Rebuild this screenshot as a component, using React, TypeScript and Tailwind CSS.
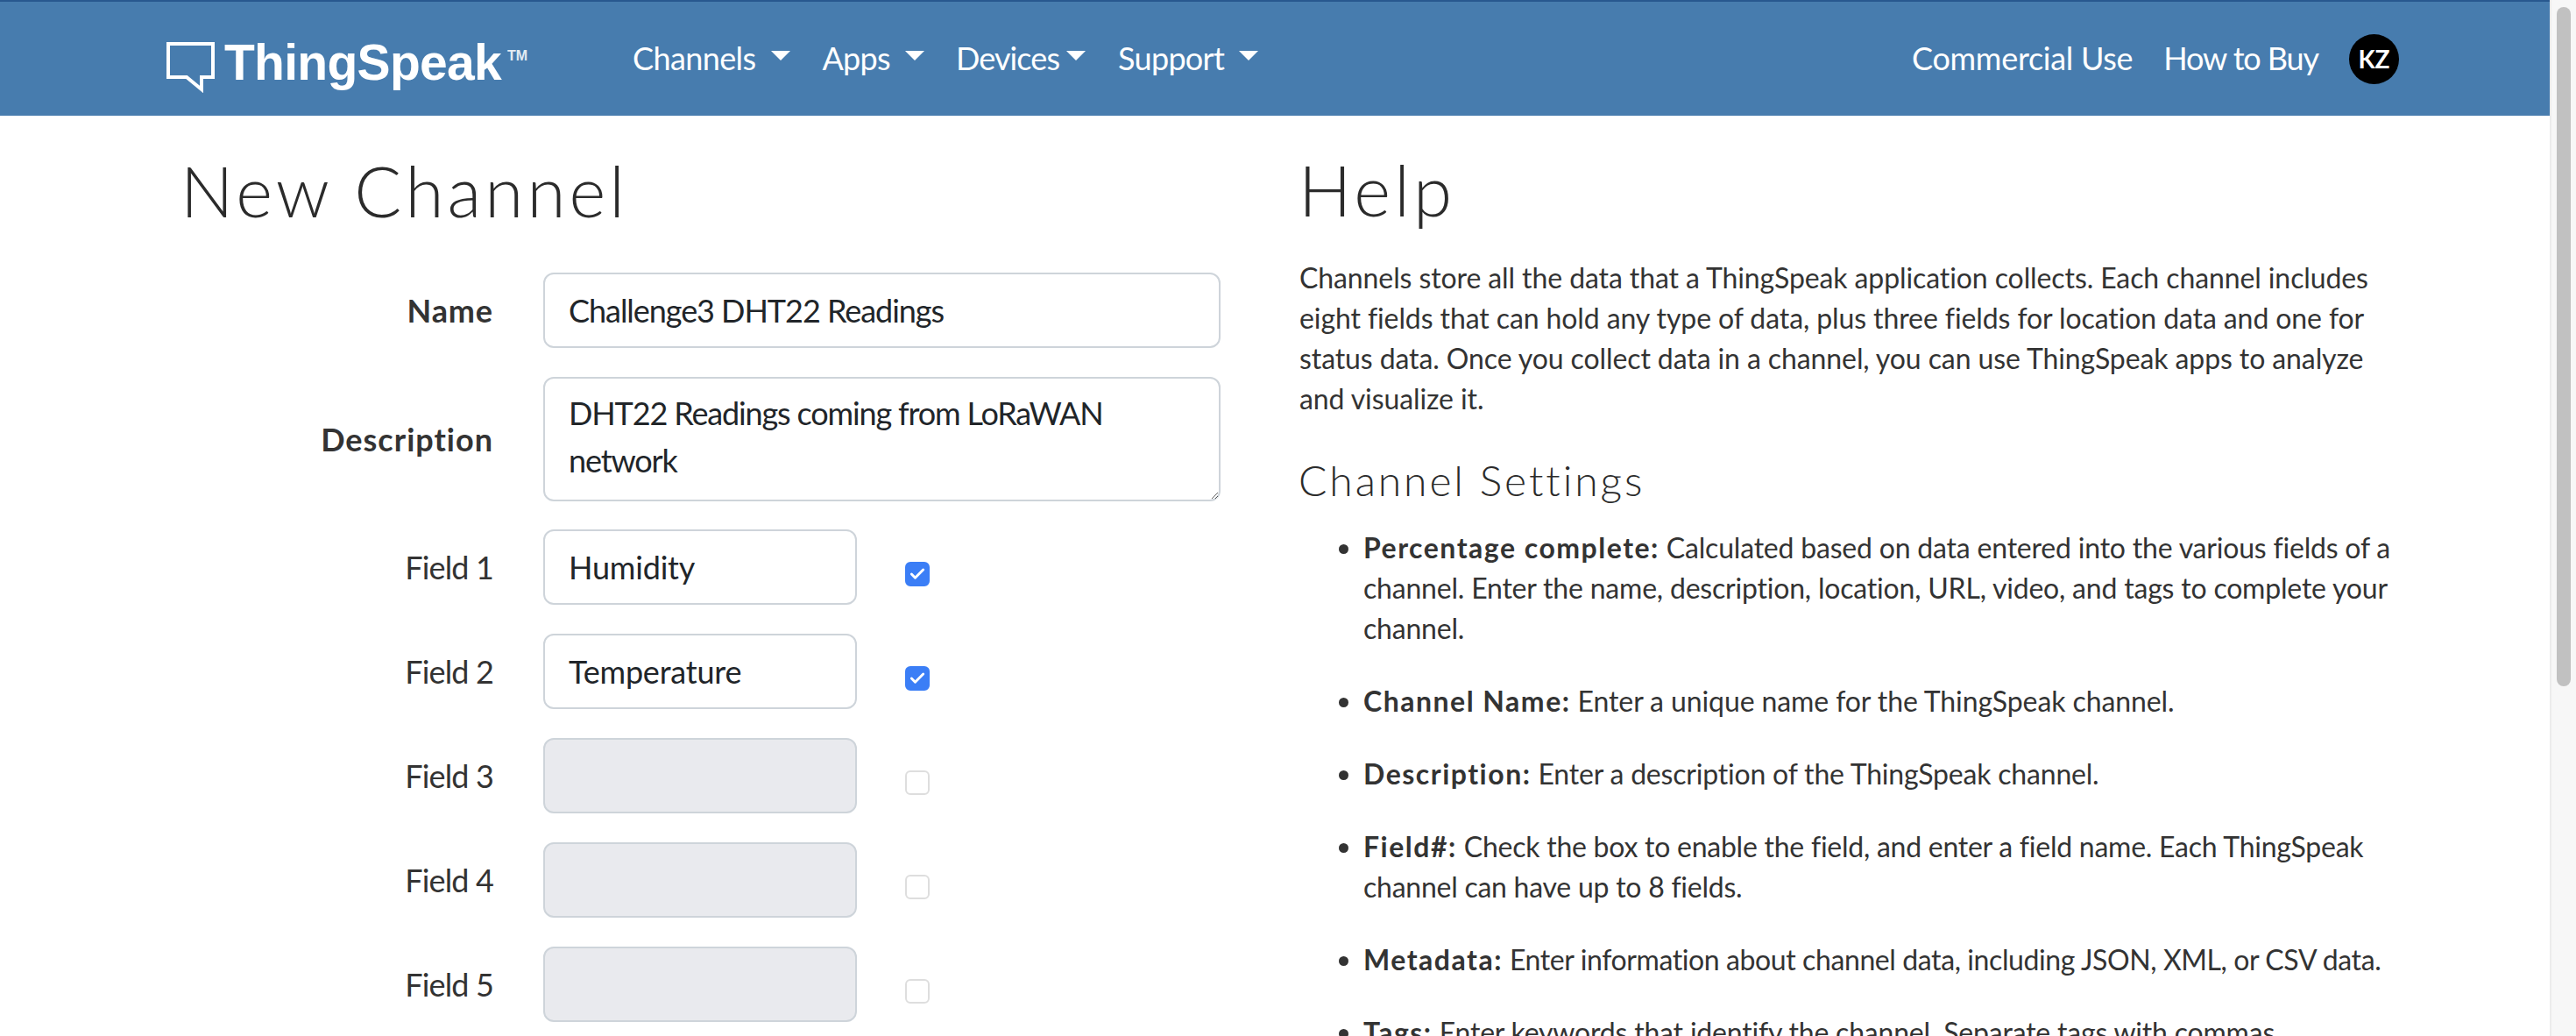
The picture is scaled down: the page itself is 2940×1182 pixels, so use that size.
import { Check } from "lucide-react";

const NavLink = ({ label, caret, className }: { label: string; caret?: boolean; className?: string }) => (
  <a className={"flex items-center text-[36px] leading-[54px] text-white -mt-[2px] " + (className ?? "")}>
    {label}
    {caret && <span className="ml-[17px] mb-[6px] border-x-[11px] border-t-[11px] border-x-transparent border-t-white" />}
  </a>
);

const Logo = () => (
  <div className="flex items-start w-[415px] h-[64px]">
    <svg width="55" height="58" viewBox="0 0 55 58" className="mt-[13px] shrink-0" fill="none">
      <path d="M2 2H53V40H40V54L23 40H2Z" stroke="white" strokeWidth="4" />
    </svg>
    <span className="ml-[11px] mt-[4px] font-['Liberation_Sans',sans-serif] font-bold text-[57px] leading-[64px] text-white tracking-[-0.7px]">ThingSpeak</span>
    <span className="ml-[7px] mt-[19px] font-['Liberation_Sans',sans-serif] font-bold text-[16px] leading-[20px] text-white/85">TM</span>
  </div>
);

const Navbar = () => (
  <nav className="h-[132px] shrink-0 bg-[#477cae] border-t-[2px] border-[#28588f] flex items-center pl-[190px] pr-[172px]">
    <Logo />
    <div className="flex items-center gap-[37px] ml-[117px]">
      <NavLink label="Channels" caret className="tracking-[-0.6px]" />
      <NavLink label="Apps" caret className="tracking-[-0.7px]" />
      <NavLink label="Devices" caret className="tracking-[-0.9px] -ml-[1px] [&>span]:ml-[8px]" />
      <NavLink label="Support" caret className="tracking-[-0.7px]" />
    </div>
    <div className="flex items-center ml-auto gap-[35px]">
      <NavLink label="Commercial Use" className="tracking-[-0.3px]" />
      <NavLink label="How to Buy" className="tracking-[-1.1px]" />
      <div className="w-[57px] h-[57px] rounded-full bg-black flex items-center justify-center text-white font-bold text-[28px]">KZ</div>
    </div>
  </nav>
);

const inputCls = "block h-[86px] rounded-[12px] border-[2px] border-[#ced4da] px-[27px] text-[36px] text-[#212529] outline-none bg-white disabled:bg-[#e9eaee]";

const FieldRow = ({ n, value, on }: { n: number; value?: string; on?: boolean }) => (
  <div className="flex items-center gap-[57px] mb-[33px]">
    <label className="w-[357px] text-right text-[36px] text-[#333] tracking-[-0.85px]">Field {n}</label>
    <input readOnly disabled={!on} value={value ?? ""} className={inputCls + " w-[358px] tracking-[-0.2px]"} />
    <span
      className={
        "ml-[-2px] mt-[15px] w-[28px] h-[28px] rounded-[6px] border-[2px] flex items-center justify-center " +
        (on ? "bg-[#3b7ef6] border-[#3b7ef6]" : "bg-white border-[#dedede]")
      }
    >
      {on && <Check size={20} strokeWidth={3.5} className="text-white" />}
    </span>
  </div>
);

const NewChannelForm = () => (
  <section className="w-[1483px] shrink-0 pl-[206px]">
    <h1 className="text-[80px] leading-[96px] font-light text-[#2b2b2b] pt-[37px] pb-[46px] tracking-[4.1px]">New Channel</h1>
    <div className="flex items-center gap-[57px] mb-[33px]">
      <label className="w-[357px] text-right text-[36px] font-bold text-[#333] tracking-[0.9px]">Name</label>
      <input readOnly value="Challenge3 DHT22 Readings" className={inputCls + " w-[773px] tracking-[-1.05px]"} />
    </div>
    <div className="flex items-center gap-[57px] mb-[32px]">
      <label className="w-[357px] text-right text-[36px] font-bold text-[#333] tracking-[1px]">Description</label>
      <textarea
        readOnly
        value="DHT22 Readings coming from LoRaWAN network"
        className={inputCls + " w-[773px] !h-[142px] py-[12px] leading-[54px] resize-y tracking-[-1.15px]"}
      />
    </div>
    <FieldRow n={1} value="Humidity" on />
    <FieldRow n={2} value="Temperature" on />
    <FieldRow n={3} />
    <FieldRow n={4} />
    <FieldRow n={5} />
  </section>
);

const HelpItem = ({ title, children, className }: { title: string; children: React.ReactNode; className?: string }) => (
  <li className="list-disc mb-[37px]">
    <b className="font-bold tracking-[1.5px]">{title}</b> <span className={className}>{children}</span>
  </li>
);

const HelpPanel = () => (
  <section className="flex-1 min-w-0 text-[32px] leading-[46px] text-[#333] tracking-[-0.1px] whitespace-nowrap">
    <h1 className="text-[80px] leading-[96px] font-light text-[#2b2b2b] pt-[36px] pb-[30px] tracking-[4.2px] -ml-[1px]">Help</h1>
    <p>
      Channels store all the data that a ThingSpeak application collects. Each channel includes<br />
      eight fields that can hold any type of data, plus three fields for location data and one for<br />
      status data. Once you collect data in a channel, you can use ThingSpeak apps to analyze<br />
      and visualize it.
    </p>
    <h2 className="text-[48px] leading-[58px] font-light text-[#2b2b2b] mt-[41px] mb-[25px] tracking-[2.9px] -ml-[1px]">Channel Settings</h2>
    <ul className="pl-[73px]">
      <HelpItem title="Percentage complete:" className="tracking-[-0.2px]">
        Calculated based on data entered into the various fields of a<br />
        channel. Enter the name, description, location, URL, video, and tags to complete your<br />
        channel.
      </HelpItem>
      <HelpItem title="Channel Name:">Enter a unique name for the ThingSpeak channel.</HelpItem>
      <HelpItem title="Description:" className="tracking-[-0.2px]">Enter a description of the ThingSpeak channel.</HelpItem>
      <HelpItem title="Field#:" className="tracking-[-0.25px]">
        Check the box to enable the field, and enter a field name. Each ThingSpeak<br />
        channel can have up to 8 fields.
      </HelpItem>
      <HelpItem title="Metadata:" className="tracking-[-0.4px]">Enter information about channel data, including JSON, XML, or CSV data.</HelpItem>
      <HelpItem title="Tags:" className="tracking-[-0.2px]">Enter keywords that identify the channel. Separate tags with commas.</HelpItem>
    </ul>
  </section>
);

export default function App() {
  return (
    <div className="h-screen flex overflow-hidden bg-white [font-family:Lato,sans-serif]">
      <div className="flex-1 min-w-0 flex flex-col">
        <Navbar />
        <main className="flex flex-1 min-h-0 overflow-hidden">
          <NewChannelForm />
          <HelpPanel />
        </main>
      </div>
      {/* scrollbar */}
      <aside className="w-[30px] shrink-0 bg-[#f7f7f7] border-l-[2px] border-[#ececec] pt-[8px] pl-[6px]">
        <div className="w-[16px] h-[775px] rounded-full bg-[#c1c1c1]" />
      </aside>
    </div>
  );
}
